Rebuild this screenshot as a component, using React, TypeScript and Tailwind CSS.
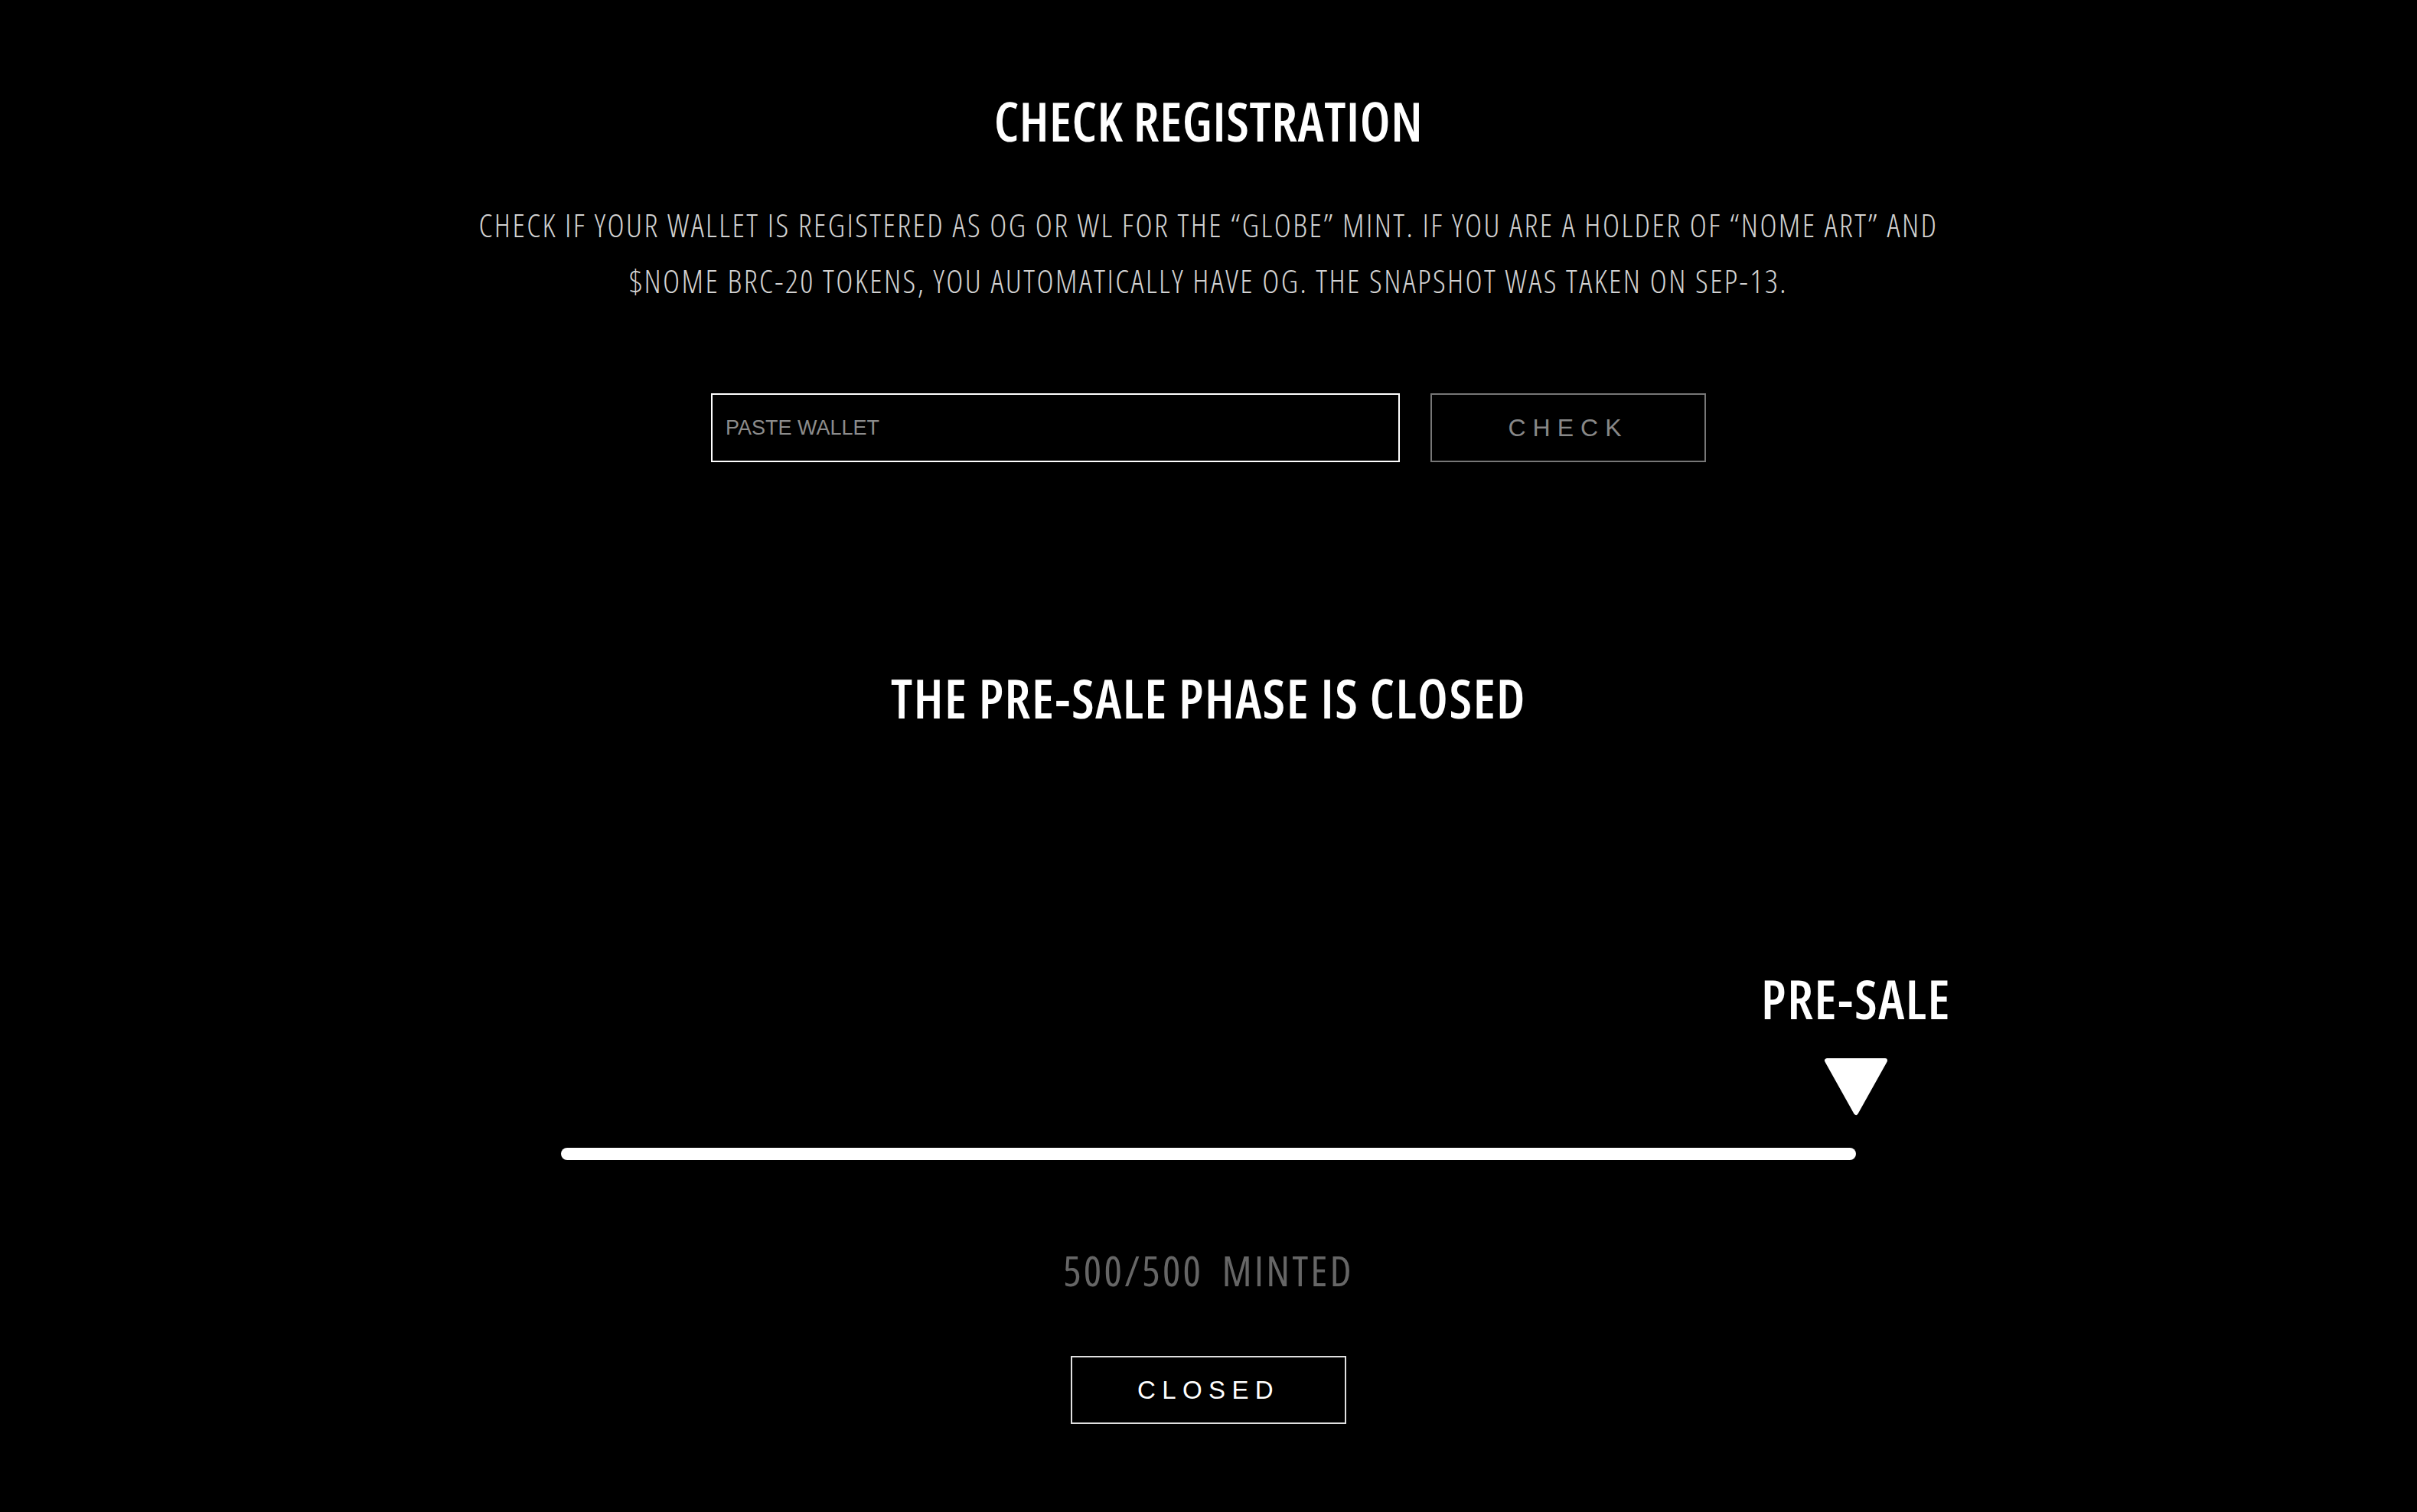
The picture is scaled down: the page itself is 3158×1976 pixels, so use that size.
import React, { useState } from "react";

// condensed display face (stands in for the site's Oswald)
const display = "font-['Open_Sans',sans-serif] [font-stretch:75%]";
const plain = "font-['Liberation_Sans',Arial,sans-serif]";

type Phase = { label: string; minted: number; supply: number; open: boolean };

const phase: Phase = { label: "PRE-SALE", minted: 500, supply: 500, open: false };

function ProgressBar({ value, label }: { value: number; label: string }) {
  return (
    <div className="w-[1692px] mx-auto flex flex-col">
      <div className="flex justify-end">
        <div className="w-[400px] -mr-[200px] flex flex-col items-center">
          <span className={`${display} text-[70px] leading-none font-semibold tracking-[1.6px] text-white`}>
            {label}
          </span>
          <svg width="84" height="76" viewBox="0 0 84 76" className="mt-[42px]">
            <polygon
              points="4,4 80,4 42,72"
              fill="#fff"
              stroke="#fff"
              strokeWidth="6"
              strokeLinejoin="round"
            />
          </svg>
        </div>
      </div>
      <div className="mt-[42px] h-[16px] w-full">
        <div className="h-full rounded-full bg-white" style={{ width: `${value * 100}%` }} />
      </div>
    </div>
  );
}

export default function App() {
  const [wallet, setWallet] = useState("");

  return (
    <div className="min-h-screen bg-black text-white flex flex-col items-center">
      {/* registration check */}
      <h1 className={`${display} mt-[123px] text-[70px] leading-none font-semibold tracking-[0.6px]`}>
        CHECK REGISTRATION
      </h1>
      <p className={`${display} mt-[64px] text-[42px] leading-[73px] font-light tracking-[2.4px] text-[#d2d2d2] text-center`}>
        CHECK IF YOUR WALLET IS REGISTERED AS OG OR WL FOR THE “GLOBE” MINT. IF YOU ARE A HOLDER OF “NOME ART” AND
        <br />
        $NOME BRC-20 TOKENS, YOU AUTOMATICALLY HAVE OG. THE SNAPSHOT WAS TAKEN ON SEP-13.
      </p>
      <div className="mt-[111px] flex gap-[40px]">
        <input
          value={wallet}
          onChange={(e) => setWallet(e.target.value)}
          placeholder="PASTE WALLET"
          className={`${plain} w-[900px] h-[90px] border-2 border-white bg-black px-[17px] text-[27px] text-white placeholder:text-[#8c8c8c] outline-none`}
        />
        <button
          className={`${plain} w-[360px] h-[90px] border-2 border-[#777] text-[32px] tracking-[9px] text-[#888]`}
        >
          CHECK
        </button>
      </div>

      {/* mint phase */}
      <h2 className={`${display} mt-[273px] text-[70px] leading-none font-semibold tracking-[1.5px]`}>
        THE PRE-SALE PHASE IS CLOSED
      </h2>
      <div className="mt-[323px] w-full">
        <ProgressBar value={phase.minted / phase.supply} label={phase.label} />
      </div>
      <div className={`${display} mt-[116px] text-[55px] leading-none tracking-[3.2px] text-[#666] [word-spacing:0.2em]`}>
        {phase.minted}/{phase.supply} MINTED
      </div>
      <button
        disabled={!phase.open}
        className={`${plain} mt-[85px] w-[360px] h-[89px] border-2 border-[#e0e0e0] text-[33px] tracking-[8.4px] text-white`}
      >
        CLOSED
      </button>
    </div>
  );
}
